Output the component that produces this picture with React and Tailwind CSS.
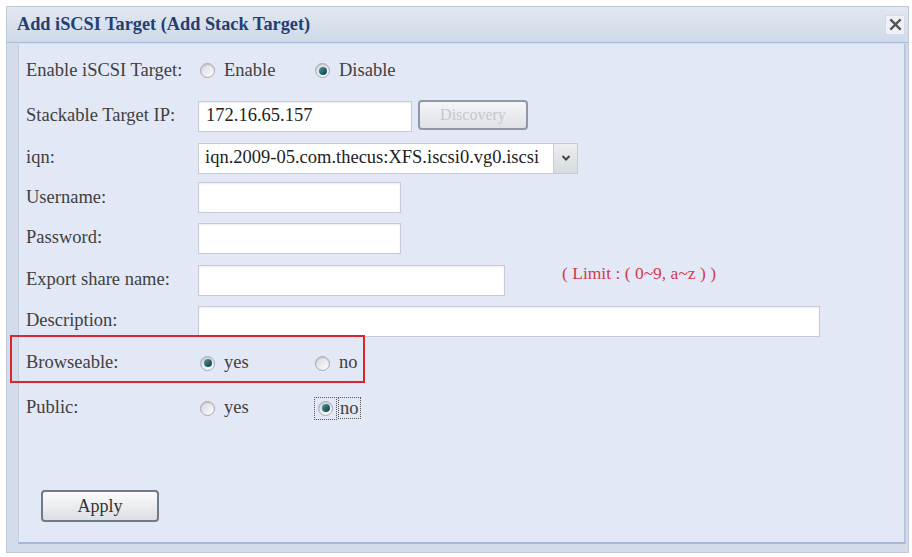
import React from "react";

const serif = { fontFamily: '"Liberation Serif", "Times New Roman", serif' };

const Radio = ({ checked, focus }) => (
  <span
    className={
      "inline-flex items-center justify-center " +
      (focus ? "border border-dotted border-[#555] p-[3px]" : "")
    }
  >
    <span className="w-[15px] h-[15px] rounded-full border border-[#a3abb5] bg-gradient-to-br from-[#d3d7dc] to-white flex items-center justify-center shadow-[inset_0_1px_1px_rgba(0,0,0,0.15)]">
      {checked && (
        <span className="w-[8px] h-[8px] rounded-full bg-gradient-to-br from-[#4a9aa0] to-[#123a45]" />
      )}
    </span>
  </span>
);

const Option = ({ checked, label }) => (
  <div className="w-[115px] flex items-center gap-[9px]">
    <Radio checked={checked} />
    <span>{label}</span>
  </div>
);

const Input = ({ width, value }) => (
  <div
    className={`${width} h-[31px] bg-white border border-[#c6ccd4] shadow-[inset_0_1px_2px_rgba(0,0,0,0.08)] flex items-center px-[7px] text-[18.5px] text-[#222]`}
  >
    {value}
  </div>
);

const Row = ({ h, label, children, extra }) => (
  <div className={`${h} flex items-center relative`}>
    <div className="w-[172px] shrink-0 text-[#404040]">{label}</div>
    <div className="flex items-center">{children}</div>
    {extra}
  </div>
);

export default function App() {
  return (
    <div className="w-[912px] h-[557px] bg-white pt-[6px] pl-[6px] overflow-hidden" style={serif}>
      <div className="w-[903px] h-[547px] bg-[#d4dceb] border border-[#bfc9d8] flex flex-col">
        {/* title bar */}
        <div className="h-[36px] shrink-0 bg-gradient-to-b from-[#e2e8f1] to-[#cfd9e8] border-b border-[#a9bddb] flex items-center justify-between pl-[10px] pr-[3px]">
          <span className="text-[18.3px] font-bold text-[#253f73]">
            Add iSCSI Target (Add Stack Target)
          </span>
          <span className="w-[20px] h-[20px] bg-[#eef2f8] border border-[#d4dbe6] flex items-center justify-center">
            <svg width="13" height="13" viewBox="0 0 12 12">
              <path d="M2 2 L10 10 M10 2 L2 10" stroke="#555" strokeWidth="2.2" strokeLinecap="square" />
            </svg>
          </span>
        </div>

        {/* content */}
        <div className="flex-1 ml-[11px] mr-[2px] mt-[1px] mb-[8px] bg-[#e3e8f7] border-l border-[#c3cee0] border-r-2 border-r-[#b8c5dc] border-b-2 border-b-[#a9b8d2] pl-[7px] pt-[3px] text-[18.5px] flex flex-col">
          <Row h="h-[47px]" label="Enable iSCSI Target:">
            <div className="flex items-center pl-[2px] text-[#404040]">
              <Option label="Enable" />
              <Option label="Disable" checked />
            </div>
          </Row>

          <Row h="h-[44px]" label="Stackable Target IP:">
            <Input width="w-[214px]" value="172.16.65.157" />
            <button className="ml-[6px] -mt-[2px] w-[110px] h-[30px] rounded-[4px] border-2 border-[#8e98a8] bg-gradient-to-b from-[#f4f5f7] to-[#dfe2e6] text-[16px] text-[#c3c8d0]">
              Discovery
            </button>
          </Row>

          <Row h="h-[40px]" label="iqn:">
            <div className="w-[380px] h-[31px] bg-white border border-[#c6ccd4] flex items-center text-[18.5px] text-[#222]">
              <span className="flex-1 pl-[6px] whitespace-nowrap overflow-hidden">
                iqn.2009-05.com.thecus:XFS.iscsi0.vg0.iscsi
              </span>
              <span className="w-[24px] h-full bg-gradient-to-b from-[#eceef1] to-[#d7dade] border-l border-[#c6ccd4] flex items-center justify-center">
                <svg width="10" height="8" viewBox="0 0 10 8">
                  <path d="M1.5 2 L5 5.5 L8.5 2" stroke="#444" strokeWidth="2" fill="none" />
                </svg>
              </span>
            </div>
          </Row>

          <Row h="h-[39px]" label="Username:">
            <Input width="w-[203px]" />
          </Row>

          <Row h="h-[42px]" label="Password:">
            <Input width="w-[203px]" />
          </Row>

          <Row
            h="h-[42px]"
            label="Export share name:"
            extra={
              <span className="ml-[57px] -mt-[14px] text-[17.5px] text-[#d23a4a] whitespace-nowrap">
                ( Limit : ( 0~9, a~z ) )
              </span>
            }
          >
            <Input width="w-[307px]" />
          </Row>

          <Row h="h-[40px]" label="Description:">
            <Input width="w-[622px]" />
          </Row>

          <Row
            h="h-[44px]"
            label="Browseable:"
            extra={
              <div className="absolute -left-[16px] top-[-6px] w-[355px] h-[48px] border-2 border-[#d9252d] pointer-events-none" />
            }
          >
            <div className="flex items-center pl-[2px] text-[#404040]">
              <Option label="yes" checked />
              <Option label="no" />
            </div>
          </Row>

          <Row h="h-[46px]" label="Public:">
            <div className="flex items-center pl-[2px] text-[#404040]">
              <Option label="yes" />
              <div className="-ml-[1px] flex items-center gap-[1px]">
                <Radio checked focus />
                <span className="border border-dotted border-[#555] px-[1px] leading-[20px]">no</span>
              </div>
            </div>
          </Row>

          <div className="mt-[59px] ml-[15px]">
            <button className="w-[118px] h-[32px] rounded-[4px] border-2 border-[#6f7a8a] bg-gradient-to-b from-[#fbfbfb] to-[#dcdfe3] text-[18px] text-[#333]">
              Apply
            </button>
          </div>
        </div>
      </div>
    </div>
  );
}
